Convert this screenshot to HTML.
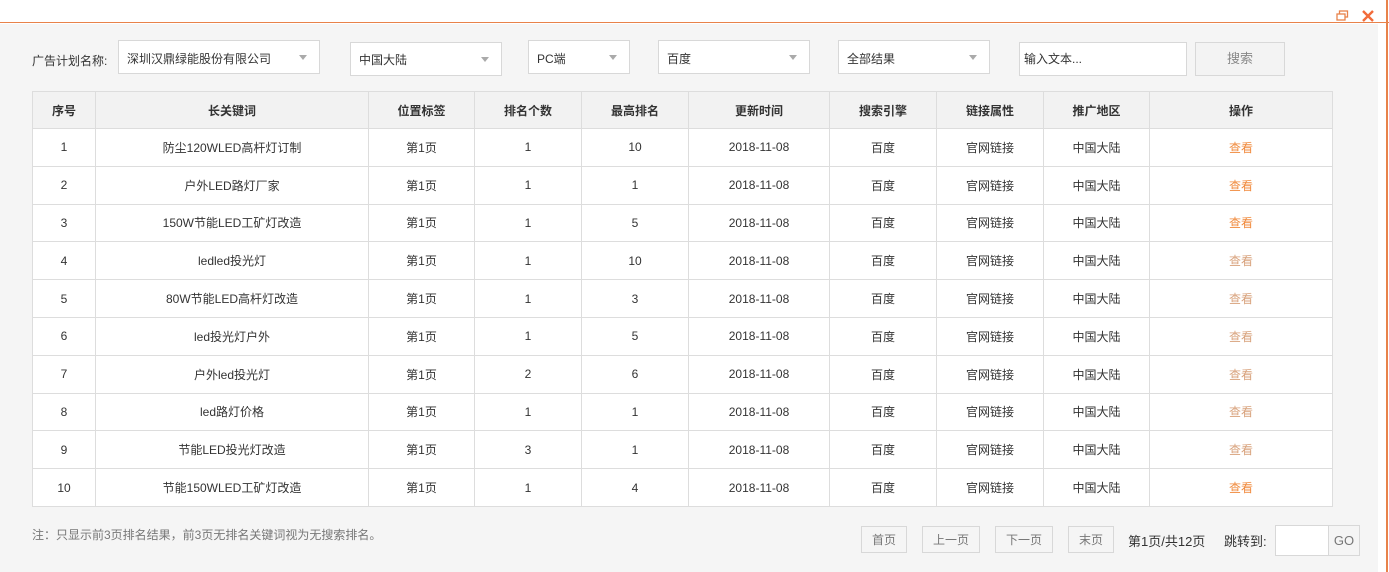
<!DOCTYPE html>
<html><head><meta charset="utf-8"><style>
*{margin:0;padding:0;box-sizing:border-box}
body{width:1389px;height:572px;overflow:hidden;background:#fff;font-family:"Liberation Sans","Noto Sans CJK SC",sans-serif;font-size:12px;color:#333;position:relative}
.top{position:absolute;left:0;top:0;width:1389px;height:23px;background:#fff;border-bottom:1px solid #e8824a}
.main{position:absolute;left:0;top:24px;width:1378px;height:548px;background:#f5f5f5}
.rline{position:absolute;left:1386px;top:0;width:2px;height:572px;background:#e8824a}
.a{position:absolute}
.sel{position:absolute;background:#fff;border:1px solid #d8d8d8;padding-left:8px;display:flex;align-items:center;font-size:12px}
.sel:after{content:"";position:absolute;right:12px;top:50%;margin-top:-2px;border:4px solid transparent;border-top:5px solid #aaa;border-bottom:none}
table{position:absolute;left:32px;top:91px;border-collapse:collapse;background:#fff;table-layout:fixed}
td,th{border:1px solid #ddd;text-align:center;height:37.8px;font-size:12px;padding:0}
th{background:#f2f2f2;font-weight:bold;height:37px}
.o{color:#f08a3c}.g{color:#d8a27c}
.btn{position:absolute;top:526px;height:27px;border:1px solid #d8d8d8;background:#f5f5f5;color:#777;display:flex;align-items:center;justify-content:center;font-size:12px}
</style></head><body>
<div class="top"></div>
<div class="main"></div>
<div class="rline"></div>
<svg class="a" style="left:1336px;top:10px" width="14" height="12" viewBox="0 0 14 12"><rect x="3.5" y="1" width="8" height="6" fill="none" stroke="#e8824a" stroke-width="1.3"/><rect x="1" y="4" width="8" height="6" fill="#fff" stroke="#e8824a" stroke-width="1.3"/></svg>
<svg class="a" style="left:1361px;top:9px" width="14" height="14" viewBox="0 0 14 14"><path d="M2 2L12 12M12 2L2 12" stroke="#f26b3a" stroke-width="2.4"/></svg>
<div class="a" style="left:32px;top:52px">广告计划名称:</div>
<div class="sel" style="left:118px;top:40px;width:202px;height:34px;align-items:flex-start;padding-top:9px">深圳汉鼎绿能股份有限公司</div>
<div class="sel" style="left:350px;top:42px;width:152px;height:34px">中国大陆</div>
<div class="sel" style="left:528px;top:40px;width:102px;height:34px;align-items:flex-start;padding-top:9px">PC端</div>
<div class="sel" style="left:658px;top:40px;width:152px;height:34px;align-items:flex-start;padding-top:9px">百度</div>
<div class="sel" style="left:838px;top:40px;width:152px;height:34px;align-items:flex-start;padding-top:9px">全部结果</div>
<div class="a" style="left:1019px;top:42px;width:168px;height:34px;background:#fff;border:1px solid #d8d8d8;padding-left:4px;line-height:32px">输入文本...</div>
<div class="a" style="left:1195px;top:42px;width:90px;height:34px;border:1px solid #d8d8d8;background:#f3f3f3;color:#888;text-align:center;line-height:32px;font-size:13px">搜索</div>
<table>
<colgroup><col width="63"><col width="273"><col width="106"><col width="107"><col width="107"><col width="141"><col width="107"><col width="107"><col width="106"><col width="183"></colgroup>
<tr><th>序号</th><th>长关键词</th><th>位置标签</th><th>排名个数</th><th>最高排名</th><th>更新时间</th><th>搜索引擎</th><th>链接属性</th><th>推广地区</th><th>操作</th></tr>
<tr><td>1</td><td>防尘120WLED高杆灯订制</td><td>第1页</td><td>1</td><td>10</td><td>2018-11-08</td><td>百度</td><td>官网链接</td><td>中国大陆</td><td class="o">查看</td></tr>
<tr><td>2</td><td>户外LED路灯厂家</td><td>第1页</td><td>1</td><td>1</td><td>2018-11-08</td><td>百度</td><td>官网链接</td><td>中国大陆</td><td class="o">查看</td></tr>
<tr><td>3</td><td>150W节能LED工矿灯改造</td><td>第1页</td><td>1</td><td>5</td><td>2018-11-08</td><td>百度</td><td>官网链接</td><td>中国大陆</td><td class="o">查看</td></tr>
<tr><td>4</td><td>ledled投光灯</td><td>第1页</td><td>1</td><td>10</td><td>2018-11-08</td><td>百度</td><td>官网链接</td><td>中国大陆</td><td class="g">查看</td></tr>
<tr><td>5</td><td>80W节能LED高杆灯改造</td><td>第1页</td><td>1</td><td>3</td><td>2018-11-08</td><td>百度</td><td>官网链接</td><td>中国大陆</td><td class="g">查看</td></tr>
<tr><td>6</td><td>led投光灯户外</td><td>第1页</td><td>1</td><td>5</td><td>2018-11-08</td><td>百度</td><td>官网链接</td><td>中国大陆</td><td class="g">查看</td></tr>
<tr><td>7</td><td>户外led投光灯</td><td>第1页</td><td>2</td><td>6</td><td>2018-11-08</td><td>百度</td><td>官网链接</td><td>中国大陆</td><td class="g">查看</td></tr>
<tr><td>8</td><td>led路灯价格</td><td>第1页</td><td>1</td><td>1</td><td>2018-11-08</td><td>百度</td><td>官网链接</td><td>中国大陆</td><td class="g">查看</td></tr>
<tr><td>9</td><td>节能LED投光灯改造</td><td>第1页</td><td>3</td><td>1</td><td>2018-11-08</td><td>百度</td><td>官网链接</td><td>中国大陆</td><td class="g">查看</td></tr>
<tr><td>10</td><td>节能150WLED工矿灯改造</td><td>第1页</td><td>1</td><td>4</td><td>2018-11-08</td><td>百度</td><td>官网链接</td><td>中国大陆</td><td class="o">查看</td></tr>
</table>
<div class="a" style="left:32px;top:526px;color:#777">注：只显示前3页排名结果，前3页无排名关键词视为无搜索排名。</div>
<div class="btn" style="left:861px;width:46px">首页</div>
<div class="btn" style="left:922px;width:58px">上一页</div>
<div class="btn" style="left:995px;width:58px">下一页</div>
<div class="btn" style="left:1068px;width:46px">末页</div>
<div class="a" style="left:1128px;top:531px;font-size:13px">第1页/共12页</div>
<div class="a" style="left:1224px;top:531px;font-size:13px">跳转到:</div>
<div class="a" style="left:1275px;top:525px;width:54px;height:31px;background:#fff;border:1px solid #d8d8d8"></div>
<div class="a" style="left:1328px;top:525px;width:32px;height:31px;background:#f5f5f5;border:1px solid #d8d8d8;color:#777;text-align:center;line-height:29px;font-size:13px">GO</div>
</body></html>
